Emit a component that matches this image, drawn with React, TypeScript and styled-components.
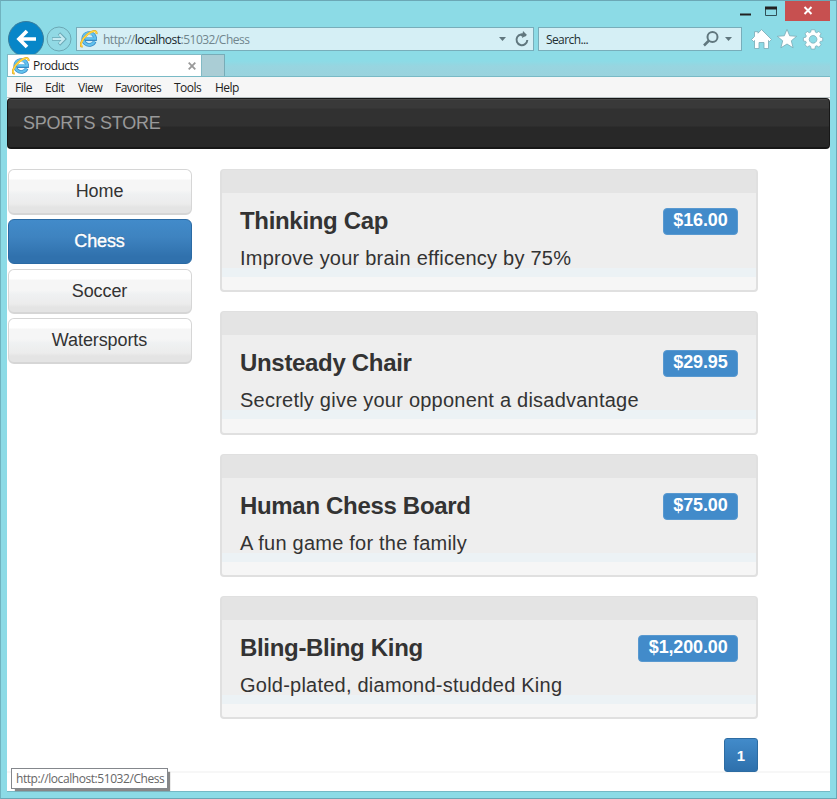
import React from "react";
import styled, { createGlobalStyle, css } from "styled-components";

const Global = createGlobalStyle`
  *{box-sizing:border-box}
  body{margin:0;background:#8cdbe6}
`;

const ui = css`font-family:"Open Sans","Noto Sans",sans-serif;`;

const Frame = styled.div`
  ${ui}
  width:837px;height:799px;background:#8cdbe6;
  border:1px solid #6ba7b5;border-left-color:#70b3bf;
  padding:0 6px 6px;display:flex;flex-direction:column;font-size:12px;color:#222;
`;
const TitleBar = styled.div`height:20px;display:flex;justify-content:flex-end;flex:none;`;
const Caption = styled.div<{ $w: number }>`width:${p => p.$w}px;height:20px;display:flex;svg{display:block}`;
const CloseButton = styled.div`width:45px;height:20px;background:#c75050;display:flex;justify-content:center;`;
const NavRow = styled.div`height:33px;display:flex;flex:none;padding-left:1px;`;
const BackIcon = styled.svg`width:36px;height:36px;flex:none;display:block;`;
const ForwardIcon = styled.svg`width:26px;height:26px;flex:none;margin:5px 4px 0 2px;display:block;`;
const Field = styled.div<{ $w: number; $ml?: number }>`
  width:${p => p.$w}px;height:24px;margin:6px 0 0 ${p => p.$ml || 0}px;flex:none;
  border:1px solid #78adba;background:#d5eff5;display:flex;align-items:center;
  svg{display:block;flex:none}
`;
const Url = styled.span`margin-left:5px;flex:1;font-size:12px;letter-spacing:-.5px;color:#71868d;b{font-weight:400;color:#17262b}`;
const Placeholder = styled.span`margin-left:7px;flex:1;font-size:12px;letter-spacing:-.6px;color:#222e31;`;
const Tools = styled.svg`width:74px;height:24px;margin:6px 0 0 9px;display:block;flex:none;`;

const TabRow = styled.div`
  height:23px;display:flex;flex:none;position:relative;
  background:linear-gradient(#8cdbe6 0 7px,#97d5e0 12px,#9ad3de);
  border-bottom:1px solid #79bac6;
`;
const Tab = styled.div`
  width:195px;height:22px;background:#fff;border:1px solid #83bac5;border-bottom:0;
  display:flex;align-items:center;padding:0 5px 0 4px;
  svg{display:block;flex:none}
`;
const TabTitle = styled.span`flex:1;margin-left:3px;font-size:12px;letter-spacing:-.55px;`;
const NewTab = styled.div`width:23px;background:#aacdd5;border:1px solid #77acb7;border-left:0;border-bottom:0;`;
const Menu = styled.div`height:21px;flex:none;background:#f6f6f6;border-bottom:1px solid #b9c1c3;display:flex;padding-left:8px;`;
const MenuItem = styled.span<{ $w: number }>`width:${p => p.$w}px;flex:none;line-height:21px;font-size:12px;letter-spacing:-.5px;white-space:nowrap;`;

const Page = styled.div`
  font-family:"Liberation Sans",Arial,sans-serif;color:#333;
  flex:1;min-height:0;width:823px;background:#fff;border-bottom:1px solid #74b9c5;
  display:flex;flex-direction:column;
`;
const Navbar = styled.div`
  height:51px;flex:none;border:1px solid #171717;border-width:1px 1px 2px;border-radius:4px;
  background:linear-gradient(#484848 0 1px,#393939 1px 9px,#313131 10px 27px,#282828 28px);
  color:#999;font-size:18px;line-height:49px;padding-left:15px;
  letter-spacing:-.24px;
`;
const Body = styled.div`
  display:grid;grid-template-columns:184px 538px;column-gap:28px;
  padding:20px 0 0 1px;height:624px;flex:none;border-bottom:2px solid #f7f7f7;
`;
const Categories = styled.div`display:flex;flex-direction:column;gap:4px;`;
const Category = styled.div<{ $active?: boolean }>`
  height:45.5px;flex:none;border-radius:6px;border:1px solid #d6d6d6;border-width:1px 1.5px 2px;
  text-align:center;font-size:18px;line-height:42px;letter-spacing:-.1px;padding-right:1px;
  background:linear-gradient(#fff 0 9px,#f6f6f6 10px 20px,#eff1f2 24px,#ececec 34px,#e4e4e4 37px);
  ${p => p.$active && css`
    height:45px;margin-bottom:1px;color:#fff;-webkit-text-stroke:.35px #fff;border:1px solid #2a6aa4;
    background:linear-gradient(#428bca 0,#3e83c0 40%,#3071ad 85%);text-shadow:0 -1px 0 rgba(0,0,0,.2);
  `}
`;
const Products = styled.div`display:flex;flex-direction:column;gap:19px;`;
const Card = styled.div`
  height:123.3px;flex:none;border:2px solid #e0e0e0;border-top-width:1px;border-radius:4px;padding:38px 18px 0;
  background:linear-gradient(#e4e4e4 0 23px,#eee 23px 98px,#ecf2f5 98px 107px,#f6f6f6 107px);
`;
const CardHead = styled.div`display:flex;justify-content:space-between;height:27px;`;
const Name = styled.div`font-size:24px;font-weight:700;line-height:26px;white-space:nowrap;letter-spacing:-.32px;`;
const Price = styled.div`
  height:27px;background:#428bca;border:1px solid #5999d0;color:#fff;border-radius:4px;
  padding:0 9.5px;font-size:18px;line-height:23px;font-weight:700;letter-spacing:-.15px;
`;
const Description = styled.div`font-size:20px;line-height:24px;margin-top:11px;white-space:nowrap;letter-spacing:.23px;`;
const PageButton = styled.div`
  width:34px;height:34px;flex:none;align-self:flex-end;border:1px solid #2d6ca2;border-radius:3px;
  background:linear-gradient(#428bca,#2e70ac);color:#fff;font-weight:700;font-size:15px;
  text-align:center;line-height:33px;
`;
const Status = styled.div`
  ${ui}
  position:absolute;left:11px;top:768px;width:157px;height:21px;background:#fff;border:1px solid #84878c;
  box-shadow:3px 3px 1px -1px #888;color:#666;font-size:12px;letter-spacing:-.43px;line-height:19px;padding-left:4px;white-space:nowrap;
`;

const IELogo = () => (
  <svg width="18" height="18" viewBox="0 0 18 18" fill="none">
    <path d="M14.7 11.5a6 6 0 1 1 .4-3.8v1.5H5.2" stroke="#3989c3" strokeWidth="3.6" />
    <path d="M14.5 11.5a6 6 0 1 1 .6-2.9H5.2" stroke="#62c2ee" strokeWidth="2.2" />
    <path d="M4.8 7.1a4.5 4.5 0 0 1 7.3-1.5" stroke="#b4e8fb" strokeWidth=".8" />
    <path d="M2.7 16.6C-1.5 17 1.6 9.3 7 4.7 12 .5 17.2-.5 16.5 4" stroke="#d89d20" strokeWidth="2" />
    <path d="M2.7 16.4C-1.1 16.5 2 9 7.3 4.6 12 .8 16.8-.3 16.3 3.7" stroke="#ffd744" strokeWidth="1.4" />
  </svg>
);
const Arrow = () => <svg width="7" height="4" viewBox="0 0 7 4"><path d="M0 0h7L3.5 4Z" fill="#60777e" /></svg>;

const categories = ["Home", "Chess", "Soccer", "Watersports"];
const menus: [string, number][] = [["File", 30], ["Edit", 33], ["View", 37], ["Favorites", 59], ["Tools", 41], ["Help", 40]];
const products = [
  { name: "Thinking Cap", price: "$16.00", text: "Improve your brain efficency by 75%" },
  { name: "Unsteady Chair", price: "$29.95", text: "Secretly give your opponent a disadvantage" },
  { name: "Human Chess Board", price: "$75.00", text: "A fun game for the family" },
  { name: "Bling-Bling King", price: "$1,200.00", text: "Gold-plated, diamond-studded King" },
];

export default function App() {
  return (
    <>
      <Global />
      <Frame>
        <TitleBar>
          <Caption $w={25}><svg width="25" height="20"><path d="M0 13.5h11" stroke="#222" strokeWidth="2" /></svg></Caption>
          <Caption $w={20}><svg width="20" height="20"><path d="M.5 6.5h11v8H.5z" fill="none" stroke="#315158" /><path d="M0 7h12" stroke="#222" strokeWidth="3" /></svg></Caption>
          <CloseButton><svg width="10" height="20"><path d="m1.5 6 7 7m0-7-7 7" stroke="#fff" strokeWidth="2" /></svg></CloseButton>
        </TitleBar>
        <NavRow>
          <BackIcon viewBox="0 0 36 36" fill="none">
            <circle cx="18" cy="18" r="17.5" fill="#0786c8" stroke="#397c9c" />
            <path d="M28 18H11m8-8-8 8 8 8" stroke="#fff" strokeWidth="3.7" />
          </BackIcon>
          <ForwardIcon viewBox="0 0 26 26" fill="none">
            <circle cx="13" cy="13" r="12" fill="#91d9e4" stroke="#6ca8b4" />
            <path d="M6 13h12m-5-5.5 5.5 5.5-5.5 5.5" stroke="#6ba8b5" strokeWidth="3.4" />
            <path d="M6.5 13h11m-4.2-4.8L18 13l-4.7 4.8" stroke="#c5eaf1" strokeWidth="2" />
          </ForwardIcon>
          <Field $w={458}>
            <svg width="3" height="1" /><IELogo />
            <Url>http://<b>localhost</b>:51032/Chess</Url>
            <Arrow />
            <svg width="27" height="22" fill="none"><path d="M19.5 7.7a5.4 5.4 0 1 0 1.8 4.3M15 7.2h5" stroke="#60777e" strokeWidth="2" /><path d="m17 3 4 4-5 3Z" fill="#60777e" /></svg>
          </Field>
          <Field $w={204} $ml={4}>
            <Placeholder>Search...</Placeholder>
            <svg width="16" height="18" fill="none"><circle cx="9.5" cy="7" r="5" stroke="#60777e" strokeWidth="2" /><path d="m6 10.5-5 5" stroke="#60777e" strokeWidth="2.5" /></svg>
            <svg width="6" height="1" /><Arrow /><svg width="9" height="1" />
          </Field>
          <Tools viewBox="0 0 74 24" fill="#fff" stroke="#78aab5" strokeWidth=".8">
            <path d="m10.5 2.5 10 10-2 2-1-1v8H13v-6H8v6H3.5v-8l-1 1-2-2 3-3V4.7H7v1.5Z" />
            <path d="m36 2.3 2.7 6.5 7 .5-5.4 4.5 1.8 7-6.1-3.8-6.1 3.8 1.8-7-5.4-4.5 7-.5Z" />
            <path fillRule="evenodd" d="m60 3 4 0 .6 2.6 1.4.6 2.3-1.4 2.4 2.6-1.4 2.3.6 1.4 2.6.6v3.4l-2.6.6-.6 1.4 1.4 2.2-2.5 2.5-2.2-1.4-1.4.6L64 24h-4l-.6-2.9-1.4-.7-2.3 1.4-2.4-2.5 1.4-2.3-.6-1.3-2.6-.6v-3.4l2.6-.6.6-1.4-1.4-2.3 2.4-2.6 2.3 1.4 1.4-.6Zm2 6.2a4.2 4.2 0 1 0 .1 0Z" transform="translate(5 0) scale(.92)" />
          </Tools>
        </NavRow>
        <TabRow>
          <Tab><IELogo /><TabTitle>Products</TabTitle><svg width="8" height="8"><path d="m.7.7 6.6 6.6m0-6.6L.7 7.3" stroke="#999" strokeWidth="1.8" /></svg></Tab>
          <NewTab />
        </TabRow>
        <Menu>{menus.map(([label, w]) => <MenuItem key={label} $w={w}>{label}</MenuItem>)}</Menu>
        <Page>
          <Navbar>SPORTS STORE</Navbar>
          <Body>
            <Categories>{categories.map(c => <Category key={c} $active={c === "Chess"}>{c}</Category>)}</Categories>
            <Products>
              {products.map(p => (
                <Card key={p.name}>
                  <CardHead><Name>{p.name}</Name><Price>{p.price}</Price></CardHead>
                  <Description>{p.text}</Description>
                </Card>
              ))}
              <PageButton>1</PageButton>
            </Products>
          </Body>
        </Page>
      </Frame>
      <Status>http://localhost:51032/Chess</Status>
    </>
  );
}
